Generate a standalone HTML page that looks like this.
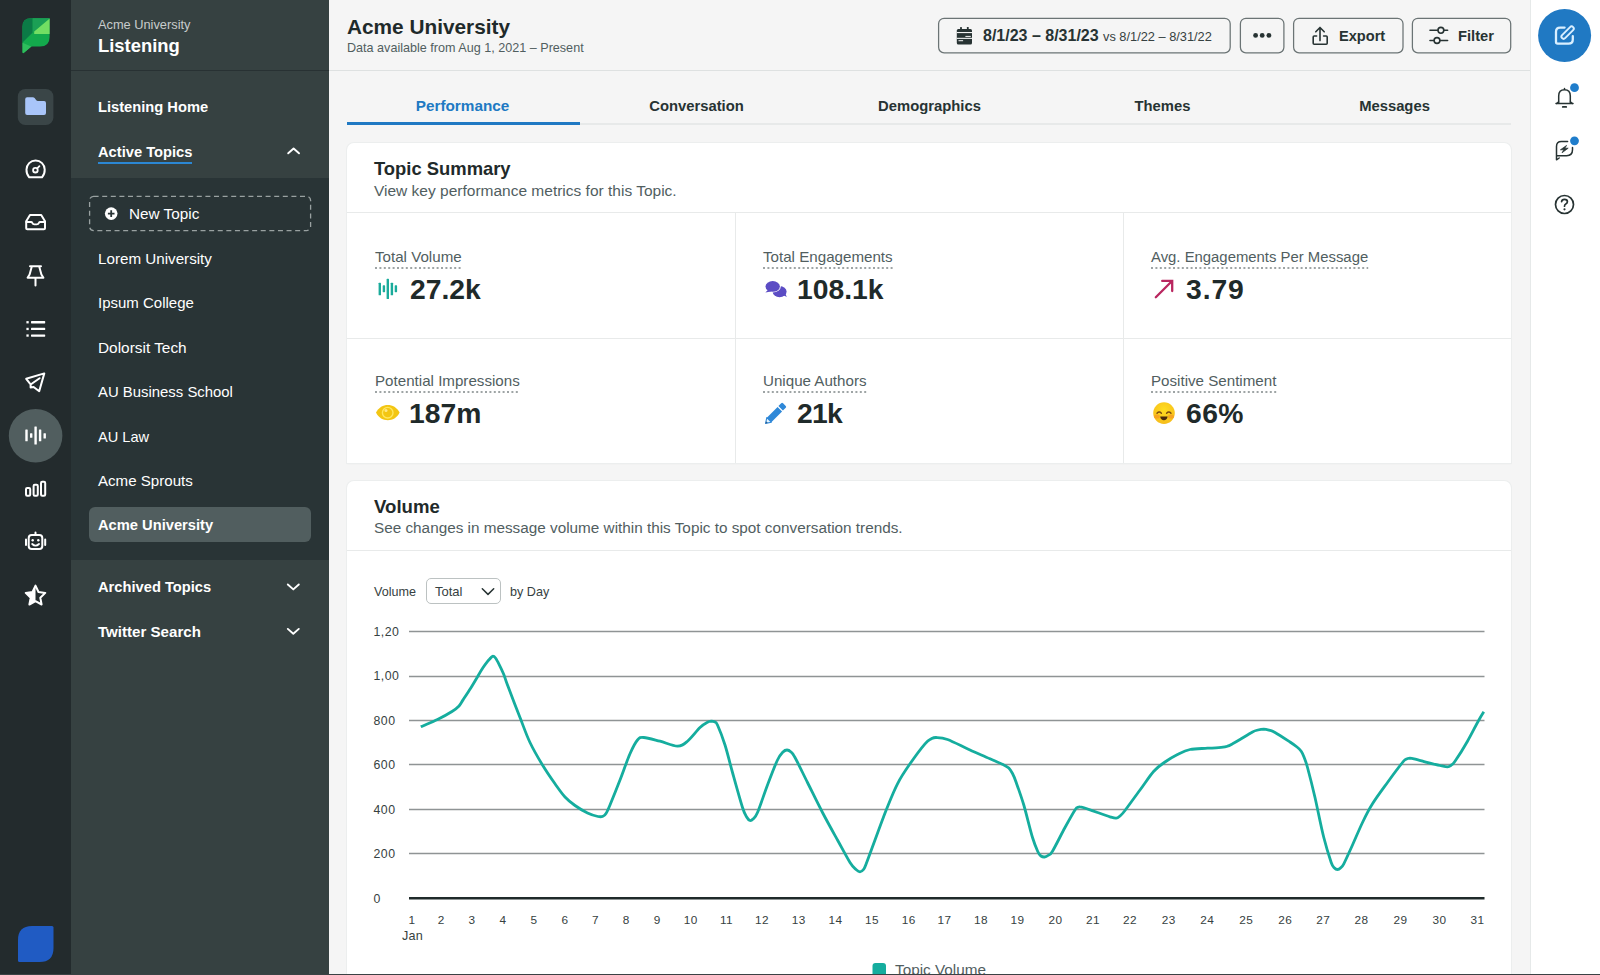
<!DOCTYPE html>
<html lang="en">
<head>
<meta charset="utf-8">
<title>Acme University - Listening</title>
<style>
*{box-sizing:border-box;margin:0;padding:0}
html,body{width:1600px;height:975px;overflow:hidden;background:#f5f5f5}
body{font-family:"Liberation Sans",Arial,sans-serif;color:#273333;position:relative}
.a{position:absolute;white-space:nowrap}
.b{font-weight:700}
#rail{left:0;top:0;width:71px;height:975px;background:#232b2d}
#side{left:71px;top:0;width:258px;height:975px;background:#364141}
#sidehead{left:0;top:0;width:258px;height:71px;border-bottom:1px solid #283133}
#sub{left:0;top:178px;width:258px;height:382px;background:#293436}
#side .t{left:27px;color:#fff;font-size:15px;line-height:20px}
#side .h{left:27px;color:#fff;font-size:14.7px;line-height:20px;font-weight:700}
#main{left:329px;top:0;width:1201px;height:975px;background:#f5f5f5}
#mainhead{left:0;top:0;width:1201px;height:71px;border-bottom:1px solid #dee1e1}
#rrail{left:1530px;top:0;width:70px;height:975px;background:#fff;border-left:1px solid #e6e9e9}
.btn{border:1.4px solid #6a7576;border-radius:6px;height:35px;top:18px;background:#f5f5f5}
.card{background:#fff;border-radius:7px;box-shadow:0 0 0 1px #eceeee, 0 1px 2px rgba(39,51,51,.06)}
.tab{top:96px;width:233px;text-align:center;font-size:14.8px;line-height:20px;font-weight:700;color:#273333}
.lbl{font-size:15.15px;line-height:18px;color:#515e5f;padding-bottom:3px}
.lbl svg{position:absolute;left:0;bottom:0;width:100%;height:2px;overflow:visible}
.val{font-size:28.3px;line-height:34px;font-weight:700;color:#1f2a2a}
.yl{left:26px;font-size:12.6px;line-height:14px;color:#364141;letter-spacing:.3px}
.xl{top:913px;font-size:12.6px;line-height:14px;color:#364141;text-align:center;width:30px;margin-left:-15px}
</style>
</head>
<body>

<!-- LEFT ICON RAIL -->
<div id="rail" class="a">
</div>

<!-- SIDEBAR -->
<div id="side" class="a">
  <div id="sidehead" class="a"></div>
  <div class="a" style="left:27px;top:17px;font-size:12.8px;line-height:16px;color:#c8cccc">Acme University</div>
  <div class="a b" style="left:27px;top:34px;font-size:18.4px;line-height:24px;color:#fff">Listening</div>
  <div class="a h" style="top:97px">Listening Home</div>
  <div class="a h" style="top:142px">Active Topics</div>
  <div class="a" style="left:27px;top:162px;width:94px;height:2px;background:#2b87d3"></div>
  <div id="sub" class="a"></div>
  <div class="a t" style="left:58px;top:204px;font-size:15.3px">New Topic</div>
  <div class="a t" style="top:249px;font-size:15.2px">Lorem University</div>
  <div class="a t" style="top:293px;font-size:15.0px">Ipsum College</div>
  <div class="a t" style="top:338px;font-size:15.4px">Dolorsit Tech</div>
  <div class="a t" style="top:382px;font-size:14.9px">AU Business School</div>
  <div class="a t" style="top:427px;font-size:14.6px">AU Law</div>
  <div class="a t" style="top:471px;font-size:15.1px">Acme Sprouts</div>
  <div class="a" style="left:18px;top:507px;width:222px;height:35px;background:#515e5f;border-radius:6px"></div>
  <div class="a h" style="top:515px">Acme University</div>
  <div class="a h" style="top:577px">Archived Topics</div>
  <div class="a h" style="top:622px;font-size:15.1px">Twitter Search</div>
</div>

<!-- MAIN -->
<div id="main" class="a">
  <div id="mainhead" class="a"></div>
  <div class="a b" style="left:18px;top:14px;font-size:20.8px;line-height:26px;color:#1f2a2a">Acme University</div>
  <div class="a" style="left:18px;top:40px;font-size:12.6px;line-height:16px;color:#515e5f">Data available from Aug 1, 2021 – Present</div>

  <!-- header buttons -->
  <div class="a b" style="left:654px;top:26px;font-size:16px;line-height:20px">8/1/23 – 8/31/23</div>
  <div class="a" style="left:774px;top:29px;font-size:12.8px;line-height:16px;color:#364141">vs 8/1/22 – 8/31/22</div>
  <div class="a b" style="left:1010px;top:26px;font-size:14.6px;line-height:20px">Export</div>
  <div class="a b" style="left:1129px;top:26px;font-size:14.7px;line-height:20px">Filter</div>

  <!-- tabs -->
  <div class="a" style="left:18px;top:123px;width:1164px;height:2px;background:#e7e9e9"></div>
  <div class="a" style="left:18px;top:122px;width:233px;height:3px;background:#2079c3"></div>
  <div class="a tab" style="left:17px;color:#2079c3;font-size:15.3px">Performance</div>
  <div class="a tab" style="left:251px">Conversation</div>
  <div class="a tab" style="left:484px">Demographics</div>
  <div class="a tab" style="left:717px">Themes</div>
  <div class="a tab" style="left:949px">Messages</div>

  <!-- Topic Summary card -->
  <div class="a card" style="left:18px;top:143px;width:1164px;height:320px;border-radius:7px 7px 0 0"></div>
  <div class="a b" style="left:45px;top:157px;font-size:18.4px;line-height:24px;color:#1f2a2a">Topic Summary</div>
  <div class="a" style="left:45px;top:182px;font-size:15.5px;line-height:18px;color:#515e5f">View key performance metrics for this Topic.</div>
  <div class="a" style="left:18px;top:212px;width:1164px;height:1px;background:#e8eaea"></div>
  <div class="a" style="left:18px;top:338px;width:1164px;height:1px;background:#e8eaea"></div>
  <div class="a" style="left:406px;top:213px;width:1px;height:250px;background:#e8eaea"></div>
  <div class="a" style="left:794px;top:213px;width:1px;height:250px;background:#e8eaea"></div>

  <div class="a lbl" style="left:46px;top:248px">Total Volume<svg><line x1="0" y1="1" x2="100%" y2="1" stroke="#7f8788" stroke-width="1.3" stroke-dasharray="2 2.4"/></svg></div>
  <div class="a val" style="left:81px;top:272px">27.2k</div>
  <div class="a lbl" style="left:434px;top:248px">Total Engagements<svg><line x1="0" y1="1" x2="100%" y2="1" stroke="#7f8788" stroke-width="1.3" stroke-dasharray="2 2.4"/></svg></div>
  <div class="a val" style="left:468px;top:272px">108.1k</div>
  <div class="a lbl" style="left:822px;top:248px;font-size:14.88px">Avg. Engagements Per Message<svg><line x1="0" y1="1" x2="100%" y2="1" stroke="#7f8788" stroke-width="1.3" stroke-dasharray="2 2.4"/></svg></div>
  <div class="a val" style="left:857px;top:272px;letter-spacing:.9px">3.79</div>
  <div class="a lbl" style="left:46px;top:372px">Potential Impressions<svg><line x1="0" y1="1" x2="100%" y2="1" stroke="#7f8788" stroke-width="1.3" stroke-dasharray="2 2.4"/></svg></div>
  <div class="a val" style="left:80px;top:396px">187m</div>
  <div class="a lbl" style="left:434px;top:372px">Unique Authors<svg><line x1="0" y1="1" x2="100%" y2="1" stroke="#7f8788" stroke-width="1.3" stroke-dasharray="2 2.4"/></svg></div>
  <div class="a val" style="left:468px;top:396px;letter-spacing:-.7px">21k</div>
  <div class="a lbl" style="left:822px;top:372px">Positive Sentiment<svg><line x1="0" y1="1" x2="100%" y2="1" stroke="#7f8788" stroke-width="1.3" stroke-dasharray="2 2.4"/></svg></div>
  <div class="a val" style="left:857px;top:396px;letter-spacing:.45px">66%</div>

  <!-- Volume card -->
  <div class="a card" style="left:18px;top:481px;width:1164px;height:520px"></div>
  <div class="a b" style="left:45px;top:495px;font-size:18.6px;line-height:24px;color:#1f2a2a">Volume</div>
  <div class="a" style="left:45px;top:519px;font-size:15.3px;line-height:18px;color:#515e5f">See changes in message volume within this Topic to spot conversation trends.</div>
  <div class="a" style="left:18px;top:550px;width:1164px;height:1px;background:#e8eaea"></div>
  <div class="a" style="left:45px;top:585px;font-size:12.6px;line-height:14px;color:#364141">Volume</div>
  <div class="a" style="left:97px;top:578px;width:75px;height:26px;border:1px solid #bcc2c2;border-radius:5px;background:#fff"></div>
  <div class="a" style="left:106px;top:585px;font-size:13px;line-height:14px;color:#364141">Total</div>
  <div class="a" style="left:181px;top:585px;font-size:12.6px;line-height:14px;color:#364141">by Day</div>
</div>

<!--CHART-->
<svg class="a" style="left:0;top:0" width="1600" height="975" viewBox="0 0 1600 975" font-family="Liberation Sans, Arial, sans-serif">
<line x1="409" x2="1484.5" y1="631.5" y2="631.5" stroke="#8f9495" stroke-width="1.4"/>
<line x1="409" x2="1484.5" y1="676.5" y2="676.5" stroke="#8f9495" stroke-width="1.4"/>
<line x1="409" x2="1484.5" y1="720.5" y2="720.5" stroke="#8f9495" stroke-width="1.4"/>
<line x1="409" x2="1484.5" y1="764.5" y2="764.5" stroke="#8f9495" stroke-width="1.4"/>
<line x1="409" x2="1484.5" y1="809.5" y2="809.5" stroke="#8f9495" stroke-width="1.4"/>
<line x1="409" x2="1484.5" y1="853.5" y2="853.5" stroke="#8f9495" stroke-width="1.4"/>
<line x1="409" x2="1484.5" y1="898.3" y2="898.3" stroke="#1f2a2a" stroke-width="2.6"/>
<path d="M420.8 726.8C423.5 725.5 432.3 722.0 437.5 719.5C442.7 717.0 448.5 713.7 452.0 711.5C455.5 709.3 456.9 708.2 458.8 706.2C460.6 704.3 461.2 702.6 463.2 699.6C465.2 696.6 468.5 691.7 470.8 688.0C473.1 684.3 475.1 680.9 477.1 677.5C479.1 674.1 481.2 670.4 482.9 667.8C484.6 665.2 485.9 663.4 487.2 661.8C488.5 660.2 489.7 659.0 490.6 658.0C491.6 657.0 492.1 656.1 492.9 656.1C493.7 656.1 494.4 656.5 495.5 658.0C496.6 659.5 497.9 662.0 499.3 664.8C500.7 667.5 502.4 671.1 503.8 674.5C505.2 677.9 504.8 677.8 507.5 685.0C510.2 692.2 516.2 707.9 520.0 717.5C523.8 727.1 526.2 734.6 530.0 742.5C533.8 750.4 538.3 758.1 542.5 765.0C546.7 771.9 551.2 778.4 555.0 783.8C558.8 789.1 561.7 793.4 565.0 797.0C568.3 800.6 571.2 802.8 575.0 805.5C578.8 808.2 583.7 811.2 587.5 813.0C591.3 814.8 595.4 816.0 598.0 816.5C600.6 817.0 601.7 816.8 603.0 816.3C604.3 815.8 604.8 815.4 606.0 813.5C607.2 811.6 607.7 810.6 610.0 805.0C612.3 799.4 616.7 788.5 620.0 780.0C623.3 771.5 627.1 760.4 630.0 753.8C632.9 747.1 635.2 742.7 637.5 740.0C639.8 737.3 640.0 737.3 643.8 737.5C647.5 737.7 654.4 739.8 660.0 741.2C665.6 742.7 672.9 746.2 677.5 746.2C682.1 746.2 683.8 744.4 687.5 741.2C691.2 738.1 696.8 730.6 700.0 727.5C703.2 724.4 705.1 723.5 707.0 722.5C708.9 721.5 709.9 721.3 711.2 721.2C712.6 721.2 714.0 721.4 715.0 722.0C716.0 722.6 715.8 721.2 717.5 725.0C719.2 728.8 722.5 737.1 725.0 745.0C727.5 752.9 729.6 762.1 732.5 772.5C735.4 782.9 740.1 800.0 742.5 807.5C744.9 815.0 745.8 815.3 747.0 817.5C748.2 819.7 749.0 820.2 750.0 820.5C751.0 820.8 751.8 820.3 753.0 819.0C754.2 817.7 755.1 818.2 757.5 812.5C759.9 806.8 764.2 793.8 767.5 785.0C770.8 776.2 774.9 765.5 777.5 760.0C780.1 754.5 781.4 753.7 783.0 752.0C784.6 750.3 785.7 750.0 787.0 750.0C788.3 750.0 789.7 750.8 791.0 752.0C792.3 753.2 792.2 752.4 795.0 757.5C797.8 762.6 802.9 773.3 807.5 782.5C812.1 791.7 817.5 802.9 822.5 812.5C827.5 822.1 832.9 831.7 837.5 840.0C842.1 848.3 846.9 857.6 850.0 862.5C853.1 867.4 854.3 868.0 856.0 869.5C857.7 871.0 858.8 871.8 860.0 871.8C861.2 871.8 862.5 870.8 863.5 869.5C864.5 868.2 864.3 868.7 866.2 863.8C868.2 858.8 871.7 849.0 875.0 840.0C878.3 831.0 882.5 819.4 886.2 810.0C890.0 800.6 893.5 791.5 897.5 783.8C901.5 776.0 905.4 770.4 910.0 763.8C914.6 757.1 921.5 747.9 925.0 743.8C928.5 739.6 929.1 740.0 931.0 739.0C932.9 738.0 933.5 737.4 936.2 737.5C939.0 737.6 941.9 737.4 947.5 739.5C953.1 741.6 962.9 746.8 970.0 750.0C977.1 753.2 984.5 756.3 990.0 758.8C995.5 761.2 999.9 763.0 1003.0 764.5C1006.1 766.0 1007.2 766.5 1008.8 768.0C1010.3 769.5 1011.2 771.1 1012.5 773.5C1013.8 775.9 1014.4 777.2 1016.2 782.5C1018.1 787.8 1021.0 795.8 1023.8 805.0C1026.5 814.2 1030.1 829.7 1032.5 837.5C1034.9 845.3 1036.6 848.9 1038.0 852.0C1039.4 855.1 1039.9 855.2 1041.0 856.0C1042.1 856.8 1043.3 857.1 1044.5 857.0C1045.7 856.9 1046.7 856.5 1048.0 855.5C1049.3 854.5 1049.7 855.9 1052.5 851.2C1055.3 846.6 1061.2 834.4 1065.0 827.5C1068.8 820.6 1072.8 813.4 1075.0 810.0C1077.2 806.6 1077.2 807.8 1078.0 807.3C1078.8 806.8 1079.0 806.7 1080.0 806.8C1081.0 806.8 1081.1 806.8 1084.0 807.8C1086.9 808.8 1093.2 811.0 1097.5 812.5C1101.8 814.0 1106.9 815.8 1110.0 816.8C1113.1 817.8 1114.6 818.4 1116.2 818.2C1117.9 818.1 1118.5 817.3 1120.0 816.0C1121.5 814.7 1121.7 814.8 1125.0 810.5C1128.3 806.2 1135.2 796.5 1140.0 790.0C1144.8 783.5 1149.6 775.9 1153.8 771.2C1157.9 766.6 1161.0 764.8 1165.0 762.0C1169.0 759.2 1173.3 756.6 1177.5 754.5C1181.7 752.4 1185.0 750.5 1190.0 749.5C1195.0 748.5 1202.3 748.6 1207.5 748.2C1212.7 747.9 1217.7 747.6 1221.0 747.3C1224.3 747.0 1225.5 746.9 1227.5 746.2C1229.5 745.6 1230.9 744.6 1233.0 743.5C1235.1 742.4 1236.8 741.4 1240.0 739.5C1243.2 737.6 1249.5 733.6 1252.5 732.0C1255.5 730.4 1256.1 730.5 1258.0 730.0C1259.9 729.5 1261.9 729.2 1263.8 729.2C1265.6 729.3 1267.1 729.7 1269.0 730.2C1270.9 730.7 1271.5 730.5 1275.0 732.5C1278.5 734.5 1286.3 739.6 1290.0 742.0C1293.7 744.4 1295.1 745.5 1297.0 747.0C1298.9 748.5 1300.1 749.6 1301.2 751.2C1302.4 752.9 1303.0 754.3 1304.0 757.0C1305.0 759.7 1305.7 760.8 1307.5 767.5C1309.3 774.2 1312.3 785.8 1315.0 797.5C1317.7 809.2 1321.0 826.7 1323.8 837.5C1326.5 848.3 1329.5 857.4 1331.2 862.5C1333.0 867.6 1333.5 866.8 1334.5 868.0C1335.5 869.2 1336.5 869.5 1337.5 869.5C1338.5 869.5 1339.5 869.0 1340.5 868.0C1341.5 867.0 1341.8 867.6 1343.8 863.8C1345.8 859.9 1349.4 851.9 1352.5 845.0C1355.6 838.1 1359.2 829.4 1362.5 822.5C1365.8 815.6 1368.3 810.4 1372.5 803.8C1376.7 797.1 1382.5 789.4 1387.5 782.5C1392.5 775.6 1399.4 766.4 1402.5 762.5C1405.6 758.6 1404.8 760.0 1406.0 759.3C1407.2 758.6 1408.7 758.3 1410.0 758.2C1411.3 758.2 1411.5 758.2 1414.0 758.8C1416.5 759.4 1420.7 760.6 1425.0 761.8C1429.3 762.9 1436.2 764.7 1440.0 765.5C1443.8 766.3 1445.7 766.8 1447.5 766.8C1449.3 766.7 1449.8 766.2 1451.0 765.3C1452.2 764.4 1452.2 765.3 1455.0 761.2C1457.8 757.2 1463.8 747.7 1467.5 741.2C1471.2 734.8 1474.8 727.4 1477.5 722.5C1480.2 717.6 1482.7 713.5 1483.8 711.8" fill="none" stroke="#15ad9e" stroke-width="2.8" stroke-linecap="butt" stroke-linejoin="round"/>
<g font-size="12.3" fill="#364141" letter-spacing="0.5">
<text x="373.5" y="635.9">1,20</text>
<text x="373.5" y="680.4">1,00</text>
<text x="373.5" y="724.9">800</text>
<text x="373.5" y="769.2">600</text>
<text x="373.5" y="813.6">400</text>
<text x="373.5" y="858.2">200</text>
<text x="373.5" y="902.6">0</text>
</g>
<g font-size="11.8" fill="#364141" text-anchor="middle" letter-spacing="0.5">
<text x="412.0" y="924.2">1</text>
<text x="441.2" y="924.2">2</text>
<text x="472.0" y="924.2">3</text>
<text x="503.0" y="924.2">4</text>
<text x="534.0" y="924.2">5</text>
<text x="565.0" y="924.2">6</text>
<text x="595.5" y="924.2">7</text>
<text x="626.2" y="924.2">8</text>
<text x="657.2" y="924.2">9</text>
<text x="690.8" y="924.2">10</text>
<text x="726.5" y="924.2">11</text>
<text x="762.0" y="924.2">12</text>
<text x="798.8" y="924.2">13</text>
<text x="835.5" y="924.2">14</text>
<text x="872.0" y="924.2">15</text>
<text x="908.8" y="924.2">16</text>
<text x="944.5" y="924.2">17</text>
<text x="981.0" y="924.2">18</text>
<text x="1017.5" y="924.2">19</text>
<text x="1055.5" y="924.2">20</text>
<text x="1093.0" y="924.2">21</text>
<text x="1130.0" y="924.2">22</text>
<text x="1168.8" y="924.2">23</text>
<text x="1207.2" y="924.2">24</text>
<text x="1246.2" y="924.2">25</text>
<text x="1285.2" y="924.2">26</text>
<text x="1323.2" y="924.2">27</text>
<text x="1361.5" y="924.2">28</text>
<text x="1400.5" y="924.2">29</text>
<text x="1439.5" y="924.2">30</text>
<text x="1477.5" y="924.2">31</text>
<text x="412.5" y="940.3" letter-spacing="0.2" font-size="12.6">Jan</text>
</g>
<rect x="872.5" y="963" width="13.5" height="14" rx="3" fill="#15ad9e"/>
<text x="895" y="975" font-size="15.3" fill="#515e5f">Topic Volume</text>
</svg>
<!--/CHART-->

<!-- RIGHT RAIL -->
<div id="rrail" class="a">
</div>

<!--ICONS-->
<svg class="a" style="left:0;top:0" width="1600" height="975" viewBox="0 0 1600 975">
<!-- logo -->
<defs><clipPath id="lg"><path d="M22.5 26.4 Q22.5 18.2 31 18.2 L49.6 18.2 L49.6 37 Q49.6 46.6 40 46.6 L31.5 46.6 L24 52.8 Q22.5 53.8 22.5 52 Z"/></clipPath></defs>
<g clip-path="url(#lg)">
<rect x="20" y="15" width="32" height="40" fill="#13a94c"/>
<polygon points="22,17 32.7,17 32.7,32.6 22,43" fill="#0b7a46"/>
<polygon points="32.7,17 50,17 50,18.2 32.7,32.6" fill="#1b9f55"/>
<polygon points="50,18.2 50,34 34.2,34 34.2,31.4" fill="#72de63"/>
<polygon points="22,42.5 31.8,46.8 22,55" fill="#2ebd5c"/>
</g>
<!-- folder box -->
<rect x="17.8" y="89" width="35.6" height="36" rx="7.5" fill="#3a4547"/>
<path d="M25.2 99.2 q0 -1.9 1.9 -1.9 h5.8 q1 0 1.7 .8 l1.7 2.2 q.6 .8 1.6 .8 h6.2 q1.9 0 1.9 1.9 v10.1 q0 1.9 -1.9 1.9 h-17 q-1.9 0 -1.9 -1.9 z" fill="#a9c5f9"/>
<!-- rail icons -->
<g fill="none" stroke="#fff" stroke-width="2" stroke-linecap="round" stroke-linejoin="round">
<!-- gauge -->
<path d="M29.2 177.3 Q26.3 174 26.5 169.6 A9.1 9.1 0 0 1 44.7 169.6 Q44.9 174 42 177.3 Z"/>
<circle cx="35.4" cy="170.2" r="2.3" stroke-width="1.8"/>
<path d="M37.2 168.4 L39.4 166.2" stroke-width="1.8"/>
<!-- inbox -->
<path d="M30 215 h11.2 l3.8 6.2 v7 q0 1.1 -1.1 1.1 h-16.6 q-1.1 0 -1.1 -1.1 v-7 z"/>
<path d="M26.4 222 h4.6 q.9 0 1.3 .9 q.6 1.5 2.1 1.5 h2.4 q1.5 0 2.1 -1.5 q.4 -.9 1.3 -.9 h4.6" stroke-width="1.9"/>
<!-- pin -->
<path d="M30 266.3 h11 M31.8 266.6 l-2.2 7.8 l-2 3.3 h15.8 l-2 -3.3 l-2.2 -7.8 M35.5 278 v7.4"/>
<!-- send -->
<path d="M44.3 373.4 L26.2 378.8 L30.6 384.3 L30.6 387.6 L33.6 387 L39.2 391.2 Z M31 384.3 L39.6 378.2"/>
<!-- bars -->
<rect x="26" y="488" width="4.2" height="7.8" rx="1.2"/>
<rect x="33.6" y="484.7" width="4.2" height="11.1" rx="1.2"/>
<rect x="41" y="481.8" width="4.2" height="14" rx="1.2"/>
<!-- bot -->
<rect x="28.7" y="535.1" width="13.6" height="13.9" rx="3"/>
<path d="M35.5 532.4 v2 M26 539.6 v5.4 M45.2 539.6 v5.4"/>
<path d="M32.2 544 q3.3 3.4 6.8 0" stroke-width="1.8"/>
<!-- star -->
<path d="M35.5 585.6 L38.5 592 L45.3 592.9 L40.3 597.7 L41.6 604.5 L35.5 601.2 L29.4 604.5 L30.7 597.7 L25.7 592.9 L32.5 592 Z"/>
</g>
<path d="M35.5 585.6 L35.5 601.2 L29.4 604.5 L30.7 597.7 L25.7 592.9 L32.5 592 Z" fill="#fff"/>
<circle cx="32.7" cy="540.2" r="1.2" fill="#fff"/><circle cx="38.3" cy="540.2" r="1.2" fill="#fff"/>
<!-- list -->
<g fill="#fff">
<rect x="26.4" y="321.1" width="2.3" height="2.3"/><rect x="31" y="321.1" width="14.2" height="2.3" rx=".6"/>
<rect x="26.4" y="327.8" width="2.3" height="2.3"/><rect x="31" y="327.8" width="14.2" height="2.3" rx=".6"/>
<rect x="26.4" y="334.4" width="2.3" height="2.3"/><rect x="31" y="334.4" width="14.2" height="2.3" rx=".6"/>
</g>
<!-- active listening -->
<circle cx="35.6" cy="435.7" r="26.8" fill="#515e5f"/>
<g fill="#fff">
<rect x="25.3" y="429.6" width="2.4" height="11.7" rx=".5"/>
<rect x="30" y="433.3" width="2.4" height="4.4" rx=".5"/>
<rect x="34.4" y="426.5" width="2.4" height="17.9" rx=".5"/>
<rect x="38.9" y="429.6" width="2.4" height="11.7" rx=".5"/>
<rect x="43.5" y="433.3" width="2.4" height="5.2" rx=".5"/>
</g>
<!-- bottom blue leaf -->
<path d="M18 940 Q18 926 32 926 L52 926 Q53.5 926 53.5 927.5 L53.5 948 Q53.5 962 39.5 962 L19.5 962 Q18 962 18 960.5 Z" fill="#205bc3"/>
<!-- sidebar chevrons -->
<g fill="none" stroke="#fff" stroke-width="1.9" stroke-linecap="round" stroke-linejoin="round">
<path d="M288.2 153.3 L293.6 148.5 L299 153.3"/>
<path d="M287.8 584.5 L293.3 589.4 L298.8 584.5"/>
<path d="M287.8 628.9 L293.3 633.8 L298.8 628.9"/>
</g>
<!-- new topic -->
<rect x="89.6" y="196.3" width="221" height="34.3" rx="4" fill="none" stroke="#99a1a1" stroke-width="1.3" stroke-dasharray="5 3.6"/>
<circle cx="111.2" cy="213.6" r="6.3" fill="#fff"/>
<path d="M111.2 210.3 v6.6 M107.9 213.6 h6.6" stroke="#293436" stroke-width="1.8" fill="none"/>
</svg>

<svg class="a" style="left:0;top:0" width="1600" height="975" viewBox="0 0 1600 975">
<g fill="none" stroke="#6b7475" stroke-width="1.25">
<rect x="938.6" y="18.3" width="291.6" height="34.5" rx="5.5"/>
<rect x="1240.4" y="18.3" width="43.5" height="34.5" rx="5.5"/>
<rect x="1293.6" y="18.3" width="109.4" height="34.5" rx="5.5"/>
<rect x="1412.4" y="18.3" width="98.3" height="34.5" rx="5.5"/>
</g>
<!-- calendar -->
<g fill="#273333">
<rect x="960.1" y="26.9" width="1.8" height="3.5" rx=".5"/><rect x="966.9" y="26.9" width="1.8" height="3.5" rx=".5"/>
<rect x="956.8" y="29" width="15.2" height="15.4" rx="1.5"/>
</g>
<g fill="#f3f4f4">
<rect x="956.8" y="32" width="15.2" height="1.1"/>
<rect x="956.8" y="37.8" width="15.2" height="1.1"/>
<rect x="965.4" y="35.9" width="5.4" height="1"/>
<rect x="958.5" y="40.2" width="4.6" height="1"/>
</g>
<!-- dots -->
<g fill="#273333"><circle cx="1255.6" cy="35.4" r="2.4"/><circle cx="1262.2" cy="35.4" r="2.4"/><circle cx="1268.9" cy="35.4" r="2.4"/></g>
<!-- export -->
<g fill="none" stroke="#273333" stroke-width="1.6" stroke-linecap="round" stroke-linejoin="round">
<path d="M1320 27.6 V40.6 M1315.8 31.8 L1320 27.5 L1324.2 31.8"/>
<path d="M1316.6 36 H1314.2 Q1313.2 36 1313.2 37 V43.3 Q1313.2 44.3 1314.2 44.3 H1326.2 Q1327.2 44.3 1327.2 43.3 V37 Q1327.2 36 1326.2 36 H1323.6"/>
<!-- filter -->
<path d="M1430 30.3 H1437.6 M1444.2 30.3 H1447.6 M1430 40.5 H1433.6 M1440.3 40.5 H1447.6"/>
<circle cx="1440.9" cy="30.3" r="2.9"/><circle cx="1437" cy="40.5" r="2.9"/>
</g>
<!-- select chevron -->
<path d="M482.3 588.8 L488 594.4 L493.7 588.8" fill="none" stroke="#273333" stroke-width="1.5" stroke-linecap="round" stroke-linejoin="round"/>
<!-- compose -->
<circle cx="1564.6" cy="35.4" r="26.5" fill="#2079c3"/>
<path d="M1564.6 27.6 H1560.2 Q1556 27.6 1556 31.8 V42 Q1556 43.6 1557.6 43.6 H1568.6 Q1572.8 43.6 1572.8 39.4 V36.2" fill="none" stroke="#d9efff" stroke-width="2.3" stroke-linecap="round" stroke-linejoin="round"/>
<path d="M1563.6 36.6 L1571.6 28.6" stroke="#d9efff" stroke-width="6.2" stroke-linecap="round"/>
<path d="M1563.6 36.6 L1571.6 28.6" stroke="#2079c3" stroke-width="2.4" stroke-linecap="round"/>
<!-- bell -->
<g fill="none" stroke="#273333" stroke-width="1.5" stroke-linecap="round" stroke-linejoin="round">
<path d="M1556 103.6 H1573 M1558.7 103.2 V96 Q1558.7 89.8 1564.5 89.8 Q1570.3 89.8 1570.3 96 V103.2 M1564.5 88.5 V89.6"/>
<path d="M1558.6 101.6 L1556.6 103.5 M1570.4 101.6 L1572.4 103.5" stroke-width="1.2"/>
<path d="M1562.8 106.9 H1566.2" stroke-width="1.8"/>
<!-- chat bolt -->
<path d="M1567.6 141.6 H1561.4 Q1556.5 141.6 1556.5 146.5 V159.8 L1559.2 158 M1556.6 155.7 H1566.6 Q1572.5 155.7 1572.5 149.8 V147.6"/>
<!-- help -->
<circle cx="1564.5" cy="204.5" r="9" stroke-width="1.7"/>
<path d="M1561.6 201.6 Q1561.8 199.3 1564.5 199.3 Q1567.4 199.3 1567.4 201.7 Q1567.4 203.2 1565.8 204 Q1564.5 204.7 1564.5 206.2" stroke-width="1.7"/>
</g>
<circle cx="1564.5" cy="209.3" r="1.1" fill="#273333"/>
<path d="M1566.6 145.4 L1560.4 149.8 H1563.8 L1562 152.8 L1568.2 148.2 H1564.8 Z" fill="#273333" stroke="#273333" stroke-width=".7" stroke-linejoin="round"/>
<circle cx="1574.5" cy="87.7" r="4.4" fill="#1f7dcb"/>
<circle cx="1574.5" cy="140.8" r="4.4" fill="#1f7dcb"/>
<!-- metric: volume bars -->
<g fill="#1aab9b">
<rect x="378.6" y="282.7" width="2.4" height="12.6" rx=".6"/>
<rect x="382.7" y="285.3" width="2.4" height="6.9" rx=".6"/>
<rect x="386.6" y="278.8" width="2.4" height="20.3" rx=".6"/>
<rect x="390.7" y="282.7" width="2.4" height="12.6" rx=".6"/>
<rect x="394.7" y="285.3" width="2.4" height="6.9" rx=".6"/>
</g>
<!-- metric: chat bubbles -->
<g fill="#5b4cc4">
<ellipse cx="779.6" cy="291.6" rx="7" ry="5.6"/>
<path d="M783 295 L786.8 297 L784.6 292 Z"/>
<ellipse cx="772.7" cy="286.4" rx="8.1" ry="6.2" fill="#fff"/>
<ellipse cx="772.7" cy="286.4" rx="7.2" ry="5.3"/>
<path d="M768.4 289.4 L765.4 292.6 L771 291.4 Z"/>
</g>
<!-- metric: arrow -->
<path d="M1155.8 297.2 L1171.8 281.2 M1162.2 280.9 H1172.2 V291" fill="none" stroke="#b9265f" stroke-width="2.3" stroke-linecap="round" stroke-linejoin="miter"/>
<!-- metric: eye -->
<path d="M376 412.6 C378.6 407.2 383.2 404.9 387.8 404.9 C392.4 404.9 397 407.2 399.6 412.6 C397 418 392.4 420.3 387.8 420.3 C383.2 420.3 378.6 418 376 412.6 Z" fill="#f3c613"/>
<circle cx="387.7" cy="412.7" r="5.3" fill="none" stroke="#ffe75e" stroke-width="1.4"/>
<circle cx="386" cy="410.6" r="1.5" fill="#ffe98a"/>
<!-- metric: pencil -->
<g transform="translate(775 414) rotate(-45)">
<rect x="-8.4" y="-3.2" width="15.2" height="6.4" fill="#2f88d8"/>
<path d="M8 -3.2 H12 Q13.3 -3.2 13.3 -1.9 V1.9 Q13.3 3.2 12 3.2 H8 Z" fill="#2f88d8"/>
<path d="M-8.4 -3.2 L-13.3 0 L-8.4 3.2 Z" fill="#e8f6ff" stroke="#2f88d8" stroke-width="1.1" stroke-linejoin="round"/>
<path d="M-11.4 -1.3 L-13.5 0 L-11.4 1.3 Z" fill="#2a5d8f"/>
</g>
<!-- metric: emoji -->
<defs><radialGradient id="em" cx="50%" cy="35%" r="65%"><stop offset="0" stop-color="#ffdd1f"/><stop offset="1" stop-color="#f6bd1c"/></radialGradient></defs>
<circle cx="1164" cy="413.1" r="10.8" fill="url(#em)"/>
<ellipse cx="1157" cy="416.4" rx="3" ry="2" fill="#f59a24" opacity=".75"/>
<ellipse cx="1171" cy="416.4" rx="3" ry="2" fill="#f59a24" opacity=".75"/>
<path d="M1157 413.2 Q1159.2 410.8 1161.4 413.2 M1166.6 413.2 Q1168.8 410.8 1171 413.2" fill="none" stroke="#7a4a12" stroke-width="1.4" stroke-linecap="round"/>
<path d="M1160.2 416.4 H1167.6 Q1167 420.2 1163.9 420.2 Q1160.8 420.2 1160.2 416.4 Z" fill="#4a2a0c"/>
</svg>

<!--/ICONS-->

<div class="a" style="left:0;top:974px;width:1600px;height:1px;background:#3a4244"></div>
</body>
</html>
